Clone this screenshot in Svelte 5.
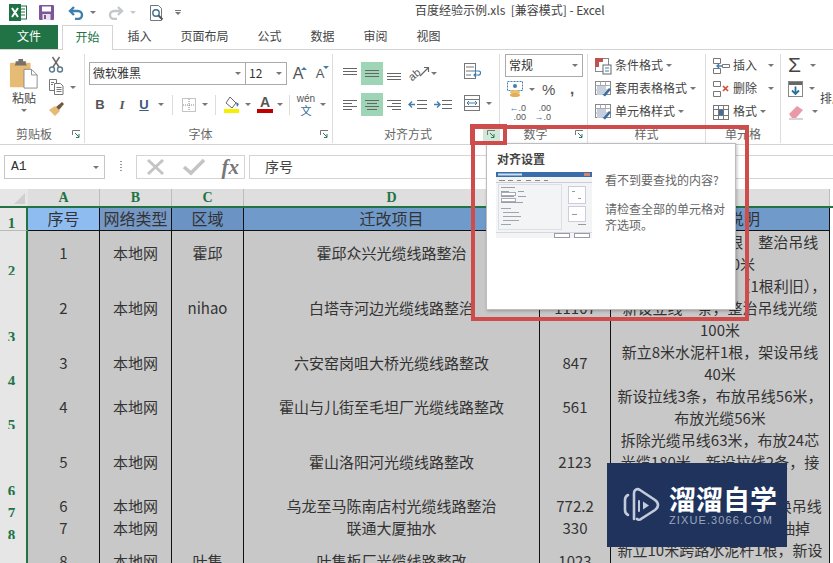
<script lang="ts">
  const tabs = ['插入', '页面布局', '公式', '数据', '审阅', '视图'];
  const columns = ['A', 'B', 'C', 'D', 'E', 'F'];

  const rows = [
    { h: 44, no: '2', cells: ['1', '本地网', '霍邱', '霍邱众兴光缆线路整治', '1340'], note: ['新立8米水泥杆2根，整治吊线', '光缆120米'] },
    { h: 66, no: '3', cells: ['2', '本地网', 'nihao', '白塔寺河边光缆线路整治', '11107'], note: ['新立8米水泥杆1根（1根利旧），', '新设立线一条，整治吊线光缆', '100米'] },
    { h: 44, no: '4', cells: ['3', '本地网', '', '六安窑岗咀大桥光缆线路整改', '847'], note: ['新立8米水泥杆1根，架设吊线', '40米'] },
    { h: 44, no: '5', cells: ['4', '本地网', '', '霍山与儿街至毛坦厂光缆线路整改', '561'], note: ['新设拉线3条，布放吊线56米，', '布放光缆56米'] },
    { h: 66, no: '6', cells: ['5', '本地网', '', '霍山洛阳河光缆线路整改', '2123'], note: ['拆除光缆吊线63米，布放24芯', '光缆180米，新设拉线2条，接', '头2个'] },
    { h: 22, no: '7', cells: ['6', '本地网', '', '乌龙至马陈南店村光缆线路整治', '772.2'], note: ['新立电杆1根，重新架设换吊线'] },
    { h: 22, no: '8', cells: ['7', '本地网', '', '联通大厦抽水', '330'], note: ['将原有主干光缆从管道抽掉'] },
    { h: 44, no: '9', cells: ['8', '本地网', '叶集', '叶集板厂光缆线路整改', '1023'], note: ['新立10米跨路水泥杆1根，新设', '吊线30米'] }
  ];
</script>

{#snippet launcher(active = false)}
  <span class="launch" class:on={active}>
    <svg width="9" height="9" viewBox="0 0 9 9" fill="none" stroke="#777">
      <path d="M.5 5V.5H8M.5 .5" />
      <path d="M3 3l4 4M7 4v3.500H4" stroke="#2f7a58" />
    </svg>
  </span>
{/snippet}

{#snippet lines(n, kind)}
  <svg width="18" height="18" viewBox="0 0 18 18" stroke="#666" fill="none">
    {#if kind === 'left'}
      <path d="M2 4.500h14M2 7.500h9M2 10.500h14M2 13.500h9" />
    {:else if kind === 'center'}
      <path d="M2 4.500h14M4 7.500h10M2 10.500h14M4 13.500h10" />
    {:else if kind === 'right'}
      <path d="M2 4.500h14M7 7.500h9M2 10.500h14M7 13.500h9" />
    {:else if kind === 'top'}
      <path d="M2 {n + .5}h14M2 {n + 3.5}h14M2 {n + 6.5}h14" />
    {/if}
  </svg>
{/snippet}

{#snippet tableIcon(brush)}
  <svg width="18" height="18" viewBox="0 0 18 18" fill="none">
    <rect x="1.500" y="1.500" width="15" height="13" fill="#fff" stroke="#888" />
    <path d="M1.500 5.500h15M1.500 10h15M6.500 1.500v13M11.500 1.500v13" stroke="#aaa" />
    {#if brush}
      <path d="M3 6h9v6l-4 3H3z" fill="#c5cfdd" />
      <path d="M9 15l6-7 2 1.500-6 7z" fill="#3c6d9f" />
    {/if}
  </svg>
{/snippet}

<div class="app">
  <header class="titlebar">
    <div class="qat">
      <svg class="q-xl" width="18" height="17" viewBox="0 0 18 17">
        <rect x="9" y="2" width="8.500" height="13" fill="#fff" stroke="#1e7145" />
        <path d="M12 5h4M12 8h4M12 11h4" stroke="#1e7145" />
        <rect x="0" y="0" width="12" height="17" fill="#1e7145" />
        <path d="M3 4l6 9M9 4l-6 9" stroke="#fff" stroke-width="2" />
      </svg>
      <svg class="q-save" width="15" height="15" viewBox="0 0 15 15">
        <rect width="15" height="15" rx="1" fill="#7c5699" />
        <rect x="3" y="1.500" width="9" height="5" fill="#fff" />
        <rect x="3.500" y="9" width="8" height="6" fill="#e8e0ee" />
        <rect x="5" y="10" width="2" height="4" fill="#7c5699" />
      </svg>
      <svg class="q-undo" width="16" height="14" viewBox="0 0 16 14" fill="none" stroke="#3f7fb0" stroke-width="2.400">
        <path d="M6 1L2 5l4 4M2 5h8a3.500 3.500 0 0 1 0 8H7" />
      </svg>
      <i class="caret"></i>
      <svg class="q-redo" width="16" height="14" viewBox="0 0 16 14" fill="none" stroke="#c4c8cc" stroke-width="2.400">
        <path d="M10 1l4 4-4 4M14 5H6a3.500 3.500 0 0 0 0 8h3" />
      </svg>
      <i class="caret light"></i>
      <svg class="q-print" width="16" height="18" viewBox="0 0 16 18" fill="none" stroke="#777">
        <path d="M1.500 1.500h8l3 3v12h-11z" fill="#fff" />
        <circle cx="7" cy="9" r="3.200" stroke="#3d6f8f" stroke-width="1.400" />
        <path d="M9.500 11.500l4 4" stroke="#555" stroke-width="2" />
      </svg>
      <span class="q-more"><b></b><i class="caret"></i></span>
    </div>
    <div class="doc-title">百度经验示例.xls&nbsp; [兼容模式] - Excel</div>
  </header>

  <nav class="tabs">
    <div class="file">文件</div>
    <div class="tab active">开始</div>
    {#each tabs as tab}
      <div class="tab">{tab}</div>
    {/each}
  </nav>

  <section class="ribbon">
    <div class="group g-clip">
      <div class="body clip">
        <div class="paste">
          <svg width="30" height="30" viewBox="0 0 32 32">
            <rect x="1" y="4" width="22" height="26" rx="1" fill="#e6bb74" />
            <path d="M7 5V2.500h3V0h5v2.500h3V5l1 2H6z" fill="#77716a" />
            <path d="M16 11h8l6 6v14H16z" fill="#fff" stroke="#8a8a8a" />
            <path d="M24 11v6h6" fill="none" stroke="#8a8a8a" />
          </svg>
          <span>粘贴</span>
          <i class="caret"></i>
        </div>
        <div class="clip-tools">
          <svg width="16" height="17" viewBox="0 0 16 17" fill="none" stroke="#5b7c8d" stroke-width="1.400">
            <circle cx="4" cy="13.500" r="2.500" />
            <circle cx="12" cy="13.500" r="2.500" />
            <path d="M5 11L11.500 1M11 11L4.500 1" stroke="#666" />
          </svg>
          <div class="copy">
            <svg width="16" height="16" viewBox="0 0 16 16" fill="#fff" stroke="#777">
              <path d="M1.500 .5h7v11h-7z" />
              <path d="M6.500 4.500h6l2.500 2.500v8.500H6.500z" />
              <path d="M8.500 8.500h5M8.500 10.500h5M8.500 12.500h5M3 3.500h3M3 5.500h2" fill="none" />
            </svg>
            <i class="caret"></i>
          </div>
          <svg width="17" height="16" viewBox="0 0 17 16">
            <path d="M1 9l6-4 5 5-5 5z" fill="#e6bb74" />
            <path d="M8 6l6-5 2 2-5 6z" fill="#6f5a42" />
          </svg>
        </div>
      </div>
      <div class="glabel"><span class="gname">剪贴板</span>{@render launcher()}</div>
    </div>

    <div class="group g-font">
      <div class="body font">
        <div class="font-top">
          <div class="combo name"><span>微软雅黑</span><i class="caret"></i></div>
          <div class="combo size"><span>12</span><i class="caret"></i></div>
          <div class="grow"><span class="a big">A</span><i class="up"></i></div>
          <div class="grow"><span class="a">A</span><i class="down"></i></div>
        </div>
        <div class="font-bot">
          <span class="cell w22 bold">B</span>
          <span class="cell w22 ital">I</span>
          <span class="cell w22 under">U</span>
          <span class="cell w12"><i class="caret"></i></span>
          <span class="vsep"></span>
          <span class="cell w22">
            <svg width="14" height="14" viewBox="0 0 14 14" fill="none" stroke="#888" stroke-dasharray="1 1">
              <rect x=".5" y=".5" width="13" height="13" />
              <path d="M7 1v12M1 7h12" />
            </svg>
          </span>
          <span class="cell w10"><i class="caret"></i></span>
          <span class="vsep"></span>
          <span class="cell w22">
            <svg width="17" height="18" viewBox="0 0 17 18">
              <path d="M6 1l6 6-4 5-6-5z" fill="#fff" stroke="#666" />
              <path d="M12 6l3 2-2 3z" fill="#3d6fb0" />
              <rect x="0" y="13" width="15" height="4" fill="#f4f000" />
            </svg>
          </span>
          <span class="cell w10"><i class="caret"></i></span>
          <span class="cell w22 color"><b>A</b><em></em></span>
          <span class="cell w8"><i class="caret"></i></span>
          <span class="vsep"></span>
          <span class="cell w22 wen"><small>wén</small><b>文</b></span>
          <span class="cell w12"><i class="caret"></i></span>
        </div>
      </div>
      <div class="glabel"><span class="gname">字体</span>{@render launcher()}</div>
    </div>

    <div class="group g-align">
      <div class="body align">
        <div class="align-grid">
          <span class="cell w22">{@render lines(3, 'top')}</span>
          <span class="cell w22 hi">{@render lines(5, 'top')}</span>
          <span class="cell w22 low">{@render lines(8, 'top')}</span>
          <span class="orient">
            <svg width="22" height="20" viewBox="0 0 22 20" fill="none" stroke="#555">
              <text x="1" y="15" font-size="11" fill="#555" stroke="none" transform="rotate(-40 6 12)" font-family="Liberation Sans, sans-serif">ab</text>
              <path d="M12 12l8-8M16 3.500h4.500V8" stroke="#666" stroke-width="1.200" />
            </svg>
            <i class="caret"></i>
          </span>
          <span class="cell w22">{@render lines(0, 'left')}</span>
          <span class="cell w22 hi">{@render lines(0, 'center')}</span>
          <span class="cell w22">{@render lines(0, 'right')}</span>
          <span class="indents">
            <svg width="20" height="16" viewBox="0 0 20 16" fill="none" stroke="#666">
              <path d="M9 3.500h10M9 7.500h10M9 11.500h10" />
              <path d="M7 7.500H1M4 4.500l-3 3 3 3" stroke="#3f7fb0" stroke-width="1.400" />
            </svg>
            <svg width="20" height="16" viewBox="0 0 20 16" fill="none" stroke="#666">
              <path d="M9 3.500h10M9 7.500h10M9 11.500h10" />
              <path d="M1 7.500h6M4 4.500l3 3-3 3" stroke="#3f7fb0" stroke-width="1.400" />
            </svg>
          </span>
        </div>
        <div class="wrap-col">
          <svg width="18" height="18" viewBox="0 0 18 18" fill="none" stroke="#777">
            <rect x="1.500" y="1.500" width="11" height="15" fill="#fff" />
            <path d="M3 5h8M3 9h6M3 13h5" />
            <path d="M9 9h7a2 2 0 0 1-1 4h-3M13 11l-2 2 2 2" stroke="#3f7fb0" stroke-width="1.200" />
          </svg>
          <div class="merge">
            <svg width="18" height="18" viewBox="0 0 18 18" fill="none" stroke="#777">
              <rect x="1.500" y="1.500" width="15" height="15" fill="#fff" />
              <path d="M1.500 5.500h15M1.500 12.500h15" />
              <path d="M4 9h10M4 9l2-2M4 9l2 2M14 9l-2-2M14 9l-2 2" stroke="#3f7fb0" />
            </svg>
            <i class="caret"></i>
          </div>
        </div>
      </div>
      <div class="glabel"><span class="gname">对齐方式</span>{@render launcher(true)}</div>
    </div>

    <div class="group g-num">
      <div class="body num">
        <div class="combo fmt"><span>常规</span><i class="caret"></i></div>
        <div class="num-row">
          <span class="money">
            <svg width="17" height="17" viewBox="0 0 17 17">
              <rect x=".5" y=".5" width="15" height="9" fill="#fff" stroke="#3f7fb0" stroke-dasharray="2 1" />
              <circle cx="8" cy="5" r="2" fill="#3f7fb0" />
              <ellipse cx="8" cy="11" rx="5" ry="2" fill="#ecc26e" />
              <ellipse cx="8" cy="14" rx="5" ry="2" fill="#e3ae55" />
            </svg>
            <i class="caret"></i>
          </span>
          <span class="pct">%</span>
          <span class="comma">,</span>
        </div>
        <div class="num-row dec">
          <span class="dec-ico"><u>←</u>.0<br />.00</span>
          <span class="dec-ico">.00<br /><u>→</u>.0</span>
        </div>
      </div>
      <div class="glabel"><span class="gname">数字</span>{@render launcher()}</div>
    </div>

    <div class="group g-style">
      <div class="body list">
        <div class="item">
          <svg width="18" height="18" viewBox="0 0 18 18" fill="none">
            <rect x="1.500" y="1.500" width="13" height="13" fill="#fff" stroke="#888" />
            <rect x="1" y="1" width="8" height="4" fill="#c0504d" />
            <rect x="1" y="5" width="4" height="5" fill="#b55" />
            <rect x="9" y="8" width="8" height="9" fill="#fff" stroke="#666" />
            <path d="M11 11h4M11 14h4" stroke="#3f7fb0" />
          </svg>
          <span>条件格式</span><i class="caret"></i>
        </div>
        <div class="item">{@render tableIcon(true)}<span>套用表格格式</span><i class="caret"></i></div>
        <div class="item">{@render tableIcon(true)}<span>单元格样式</span><i class="caret"></i></div>
      </div>
      <div class="glabel"><span class="gname">样式</span></div>
    </div>

    <div class="group g-cells">
      <div class="body list">
        <div class="item">
          <svg width="18" height="18" viewBox="0 0 18 18" fill="none" stroke="#777">
            <path d="M1.500 1.500h7v5h-7zM1.500 11.500h7v5h-7z" fill="#fff" />
            <path d="M5 9h5M7 7l-2 2 2 2" stroke="#3f7fb0" stroke-width="1.300" />
            <path d="M10.500 7.500h7v3h-7z" fill="#fff" />
          </svg>
          <span class="wide">插入</span><i class="caret"></i>
        </div>
        <div class="item">
          <svg width="18" height="18" viewBox="0 0 18 18" fill="none" stroke="#777">
            <path d="M1.500 1.500h7v5h-7zM1.500 11.500h7v5h-7z" fill="#fff" />
            <path d="M11 6l5 5M16 6l-5 5" stroke="#d0503c" stroke-width="1.700" />
          </svg>
          <span class="wide">删除</span><i class="caret"></i>
        </div>
        <div class="item">
          <svg width="18" height="18" viewBox="0 0 18 18" fill="none" stroke="#777">
            <rect x="1.500" y="2.500" width="15" height="14" fill="#fff" />
            <path d="M1.500 6.500h15M1.500 12.500h15M6.500 2.500v14M11.500 2.500v14" />
            <rect x="7" y="7" width="4" height="5" fill="#3f6f9f" stroke="none" />
          </svg>
          <span>格式</span><i class="caret"></i>
        </div>
      </div>
      <div class="glabel"><span class="gname">单元格</span></div>
    </div>

    <div class="group g-edit">
      <div class="body edit">
        <div class="edit-col">
          <div class="item"><span class="sigma">Σ</span><i class="caret"></i></div>
          <div class="item">
            <svg width="15" height="16" viewBox="0 0 15 16">
              <rect x=".5" y=".5" width="14" height="15" fill="#fff" stroke="#888" />
              <rect x="1" y="1" width="13" height="3" fill="#666" />
              <path d="M7.500 5.500v7M4 9.500l3.500 3.500L11 9.500" fill="none" stroke="#2a6f9f" stroke-width="1.800" />
            </svg>
            <i class="caret"></i>
          </div>
          <div class="item">
            <svg width="18" height="16" viewBox="0 0 18 16">
              <path d="M1 10l8-8 6 4-7 8H4z" fill="#e89aa8" />
              <path d="M1 15h14" stroke="#aaa" />
            </svg>
            <i class="caret"></i>
          </div>
        </div>
        <span class="sort">排序和筛选</span>
      </div>
    </div>
  </section>

  <section class="formula">
    <div class="namebox"><span>A1</span><i class="caret"></i></div>
    <div class="dots"></div>
    <div class="fx-box">
      <svg width="22" height="18" viewBox="0 0 22 18" fill="none" stroke="#c4c4c4" stroke-width="3"><path d="M3 2l15 14M18 2L3 16" /></svg>
      <svg width="24" height="18" viewBox="0 0 24 18" fill="none" stroke="#c4c4c4" stroke-width="3.500"><path d="M2 9l7 6L22 2" /></svg>
      <span class="fx">fx</span>
    </div>
    <div class="input">序号</div>
  </section>

  <section class="sheet">
    <div class="grid-row col-head">
      <div class="corner"><i></i></div>
      {#each columns as c}
        <div class="col-name">{c}</div>
      {/each}
    </div>
    <div class="grid-row head-row">
      <div class="row-no">1</div>
      <div class="th t1">序号</div>
      <div class="th t2">网络类型</div>
      <div class="th t3">区域</div>
      <div class="th">迁改项目</div>
      <div class="th">长度</div>
      <div class="th">工程量说明</div>
    </div>
    {#each rows as row}
      <div class="grid-row data" style="height: {row.h}px">
        <div class="row-no">{row.no}</div>
        {#each row.cells as cell}
          <div class="td">{cell}</div>
        {/each}
        <div class="td note">
          <div>
            {#each row.note as line}
              <div>{line}</div>
            {/each}
          </div>
        </div>
      </div>
    {/each}
  </section>

  <div class="pop">
    <div class="pop-title">对齐设置</div>
    <div class="pop-body">
      <svg class="shot" width="96" height="66" viewBox="0 0 96 66">
        <rect width="96" height="66" fill="#f3f4f6" />
        <rect width="96" height="5" fill="#3b6ea8" />
        <rect x="2" y="1.500" width="24" height="2" fill="#cfe0f2" />
        <rect x="88" y="1" width="6" height="3" fill="#d9816b" />
        <path d="M3 8.500h6M12 8.500h5M21 8.500h4M30 8.500h5M39 8.500h5M48 8.500h4" stroke="#888" />
        <path d="M0 10.500h96" stroke="#c9ccd2" />
        <rect x="2.500" y="12.500" width="63" height="45" fill="none" stroke="#dcdfe3" />
        <path d="M5 15.500h14M5 19.500h8M5 24.500h13M22 19.500h6M22 24.500h8M5 30.500h22" stroke="#9a9fa8" />
        <rect x="5.500" y="20.500" width="14" height="3" fill="#fff" stroke="#aab" />
        <rect x="5.500" y="26.500" width="14" height="3" fill="#fff" stroke="#aab" />
        <path d="M5 36.500h10M7 40.500h16M7 44.500h18M7 48.500h16M5 52.500h10" stroke="#a0a4ab" />
        <rect x="72.500" y="14.500" width="17" height="17" fill="#fff" stroke="#ccd" />
        <rect x="72.500" y="34.500" width="17" height="15" fill="#fff" stroke="#ccd" />
        <path d="M76 19.500h3M82 26.500h3M76 42.500h5M82 52.500h8" stroke="#999" />
        <path d="M0 60.500h96" stroke="#d5d7db" />
        <rect x="58.500" y="61.500" width="15" height="4" fill="#fff" stroke="#99a" />
        <rect x="78.500" y="61.500" width="15" height="4" fill="#fff" stroke="#99a" />
      </svg>
      <div class="pop-text">
        <p>看不到要查找的内容?</p>
        <p>请检查全部的单元格对<br />齐选项。</p>
      </div>
    </div>
  </div>

  <div class="mark big-mark"></div>
  <div class="mark small-mark"></div>

  <div class="watermark">
    <svg width="38" height="38" viewBox="0 0 38 38" fill="none" stroke="#c3cadb" stroke-width="2.600" stroke-linecap="round">
      <path d="M6 9c-2 1-3 2-3 5v10c0 3 1 4 3 5" />
      <path d="M12 33V7c0-3 3-5 6-3l15 10c4 3 4 7 0 10L19 33c-1 1-3 1-4 0" />
      <path d="M17 15v10" stroke-width="2" />
      <path d="M21 15.500l6 4-6 4z" fill="#c3cadb" stroke="none" />
    </svg>
    <div class="wm-text">
      <div class="wm-cn">溜溜自学</div>
      <div class="wm-en">ZIXUE.3066.COM</div>
    </div>
  </div>
</div>

<style>
  :global(body) {
    margin: 0;
    background: #fff;
  }
  .app {
    position: relative;
    width: 833px;
    height: 563px;
    overflow: hidden;
    background: #fff;
    color: #444;
    font-family: "Noto Sans CJK SC", "Noto Sans", sans-serif;
    font-size: 12px;
    line-height: 16px;
  }
  .caret {
    display: inline-block;
    width: 0;
    height: 0;
    border-left: 3px solid transparent;
    border-right: 3px solid transparent;
    border-top: 3px solid #777;
  }
  .caret.light {
    border-top-color: #c4c8cc;
  }

  /* title bar */
  .titlebar {
    display: grid;
    grid-template-columns: 415px 1fr;
    height: 25px;
    align-items: center;
  }
  .qat {
    display: flex;
    align-items: center;
    padding-left: 9px;
  }
  .q-save { margin-left: 12px; }
  .q-undo { margin-left: 14px; }
  .qat .caret { margin-left: 6px; }
  .q-redo { margin-left: 12px; }
  .q-print { margin-left: 13px; }
  .q-more {
    display: flex;
    flex-direction: column;
    align-items: center;
    gap: 1px;
    margin-left: 10px;
  }
  .q-more b {
    width: 6px;
    height: 1px;
    background: #777;
  }
  .q-more .caret { margin: 0; }
  .doc-title {
    margin-top: -6px;
    color: #444;
    white-space: nowrap;
  }

  /* tabs */
  .tabs {
    display: flex;
    height: 24px;
    border-bottom: 1px solid #d4d4d4;
  }
  .file {
    width: 58px;
    margin-right: 4px;
    background: #217346;
    color: #fff;
    text-align: center;
    line-height: 22px;
  }
  .tab {
    padding: 0 14.500px;
    line-height: 22px;
    color: #444;
  }
  .tab.active {
    box-sizing: border-box;
    width: 51px;
    height: 25px;
    padding: 0;
    border: 1px solid #d4d4d4;
    border-bottom: none;
    background: #fff;
    color: #217346;
    text-align: center;
  }

  /* ribbon */
  .ribbon {
    display: flex;
    height: 95px;
    box-sizing: border-box;
    border-bottom: 1px solid #d4d4d4;
    overflow: hidden;
  }
  .group {
    display: flex;
    flex-direction: column;
    box-sizing: border-box;
    height: 89px;
    border-right: 1px solid #dcdcdc;
    margin: 4px 0 0;
  }
  .body {
    box-sizing: border-box;
    height: 72px;
    flex: none;
  }
  .glabel {
    display: flex;
    align-items: center;
    height: 17px;
    color: #666;
  }
  .gname {
    flex: 1;
    margin-bottom: 2px;
    text-align: center;
  }
  .launch {
    display: flex;
    align-items: center;
    justify-content: center;
    width: 16px;
    height: 17px;
  }
  .launch.on {
    background: #cfe8da;
  }
  .g-clip { width: 85px; }
  .g-font { width: 248px; }
  .g-align { width: 167px; }
  .g-num { width: 88px; }
  .g-style { width: 118px; }
  .g-cells { width: 75px; }
  .g-edit { flex: 1; border-right: none; }

  .clip {
    display: flex;
    padding: 2px 0 0 9px;
  }
  .paste {
    display: flex;
    flex-direction: column;
    align-items: center;
    width: 30px;
    padding-top: 3px;
    margin-right: 9px;
    color: #444;
  }
  .paste span {
    margin-top: 1px;
    font-size: 12px;
    line-height: 16px;
  }
  .paste .caret { margin-top: 3px; }
  .clip-tools {
    display: flex;
    flex-direction: column;
    align-items: flex-start;
    gap: 6px;
  }
  .copy {
    display: flex;
    align-items: center;
    gap: 6px;
  }

  .font { padding: 8px 0 0 4px; }
  .font-top {
    display: flex;
    align-items: center;
    height: 23px;
  }
  .combo {
    display: flex;
    align-items: center;
    justify-content: space-between;
    box-sizing: border-box;
    height: 23px;
    padding: 0 4px 2px 3px;
    border: 1px solid #ababab;
    background: #fff;
    color: #333;
  }
  .combo .caret { margin-top: 2px; }
  .combo.name { width: 157px; }
  .combo.size {
    width: 41px;
    border-left: none;
  }
  .grow {
    position: relative;
    width: 22px;
    text-align: center;
  }
  .a {
    font-family: "Liberation Sans", sans-serif;
    font-size: 13px;
    color: #555;
  }
  .a.big { font-size: 16px; }
  .up, .down {
    position: absolute;
    top: 1px;
    right: 2px;
    width: 0;
    height: 0;
    border-left: 3px solid transparent;
    border-right: 3px solid transparent;
  }
  .up { border-bottom: 3px solid #3f7fb0; }
  .down { border-top: 3px solid #3f7fb0; }
  .font-bot {
    display: flex;
    align-items: center;
    height: 23px;
    margin-top: 8px;
  }
  .cell {
    display: flex;
    align-items: center;
    justify-content: center;
    flex: none;
    height: 23px;
  }
  .w8 { width: 8px; }
  .w10 { width: 10px; }
  .w12 { width: 12px; }
  .w22 { width: 22px; }
  .vsep {
    flex: none;
    width: 1px;
    height: 20px;
    margin: 0 5px;
    background: #dcdcdc;
  }
  .bold, .ital, .under {
    font-family: "Liberation Sans", sans-serif;
    font-size: 13px;
    color: #555;
  }
  .bold { font-weight: 700; }
  .ital {
    font-family: "Liberation Serif", serif;
    font-style: italic;
    font-weight: 700;
  }
  .under {
    font-weight: 700;
    text-decoration: underline;
    color: #3d5a80;
  }
  .color {
    flex-direction: column;
    margin-left: 1px;
  }
  .color b {
    font: 700 14px/13px "Liberation Sans", sans-serif;
    color: #555;
  }
  .color em {
    width: 16px;
    height: 4px;
    background: #c00000;
  }
  .wen {
    flex-direction: column;
    line-height: 10px;
  }
  .wen small {
    font: 10px/10px "Liberation Sans", sans-serif;
    color: #555;
  }
  .wen b {
    font-size: 11px;
    font-weight: 400;
    line-height: 12px;
    color: #2c6a94;
  }

  .align {
    display: flex;
    padding: 8px 0 0 6px;
  }
  .align-grid {
    display: grid;
    grid-template-columns: 22px 22px 22px 48px;
    grid-template-rows: 23px 23px;
    row-gap: 8px;
  }
  .hi { background: #9fd5b7; }
  .orient, .indents {
    display: flex;
    align-items: center;
    padding-left: 3px;
    gap: 1px;
  }
  .indents { gap: 5px; }
  .wrap-col {
    display: flex;
    flex-direction: column;
    gap: 14px;
    padding: 0 0 0 10px;
  }
  .merge {
    display: flex;
    align-items: center;
    gap: 5px;
  }

  .num {
    padding: 0 0 0 5px;
  }
  .combo.fmt { width: 78px; }
  .num-row {
    display: flex;
    align-items: center;
    height: 24px;
    padding-left: 2px;
    color: #555;
  }
  .money {
    display: flex;
    align-items: center;
    gap: 5px;
    width: 35px;
  }
  .pct {
    width: 22px;
    font: 15px "Liberation Sans", sans-serif;
  }
  .comma {
    padding-left: 6px;
    font: 700 15px "Liberation Sans", sans-serif;
    line-height: 10px;
  }
  .dec {
    padding-left: 0;
    gap: 4px;
  }
  .dec-ico {
    width: 21px;
    font: 9px/9px "Liberation Sans", sans-serif;
    color: #555;
    text-align: right;
  }
  .dec-ico u {
    color: #3f7fb0;
    text-decoration: none;
  }

  .list {
    display: flex;
    flex-direction: column;
    padding: 0 0 0 6px;
  }
  .item {
    display: flex;
    align-items: center;
    gap: 3px;
    height: 23px;
    white-space: nowrap;
    color: #444;
  }
  .item span {
    margin: 0 0 2px;
  }
  .item .wide { margin-right: 8px; }

  .edit {
    display: flex;
    padding-left: 7px;
  }
  .edit-col { width: 35px; }
  .edit-col .item {
    gap: 6px;
  }
  .sigma {
    width: 16px;
    font: 21px/23px "Liberation Sans", sans-serif;
    color: #444;
  }
  .sort {
    align-self: center;
    width: 12px;
    margin: 16px 0 0 -3px;
    white-space: nowrap;
  }

  /* formula bar */
  .formula {
    display: flex;
    align-items: center;
    height: 44px;
    box-sizing: border-box;
    padding: 0 0 0 4px;
  }
  .namebox {
    display: flex;
    align-items: center;
    justify-content: space-between;
    box-sizing: border-box;
    width: 101px;
    height: 24px;
    padding: 0 5px 0 6px;
    border: 1px solid #c6c6c6;
    font-family: "Liberation Mono", monospace;
    font-size: 13px;
    color: #333;
  }
  .dots {
    width: 2px;
    height: 12px;
    margin: 0 14px 0 15px;
    background: repeating-linear-gradient(#999 0 1px, transparent 1px 3px);
  }
  .fx-box {
    display: flex;
    align-items: center;
    justify-content: space-between;
    box-sizing: border-box;
    width: 109px;
    height: 24px;
    padding: 0 5px 0 8px;
    border: 1px solid #d4d4d4;
  }
  .fx {
    font: italic 700 21px/22px "Liberation Serif", serif;
    color: #777;
  }
  .input {
    flex: 1;
    height: 24px;
    box-sizing: border-box;
    margin-left: 4px;
    padding-left: 15px;
    border: 1px solid #d4d4d4;
    border-right: none;
    font-size: 14px;
    line-height: 20px;
    color: #444;
  }

  /* sheet */
  .grid-row {
    display: grid;
    grid-template-columns: 28px 72px 72px 72px 296px 71px 219px;
  }
  .col-head {
    height: 19px;
    box-sizing: border-box;
    border-bottom: 2px solid #217346;
  }
  .corner {
    position: relative;
    background: #e6e6e6;
  }
  .corner i {
    position: absolute;
    right: 3px;
    bottom: 2px;
    border-left: 11px solid transparent;
    border-bottom: 11px solid #cfcfcf;
  }
  .col-name {
    box-sizing: border-box;
    border-right: 1px solid #bcbcbc;
    background: #dedede;
    text-align: center;
    font: 700 14px/17px "Liberation Serif", serif;
    color: #217346;
  }
  .head-row {
    height: 23px;
  }
  .row-no {
    display: flex;
    align-items: flex-end;
    justify-content: center;
    box-sizing: border-box;
    padding: 0 3px 0 0;
    border-right: 2px solid #217346;
    border-bottom: 1px solid #bbb;
    background: #e6e6e6;
    font: 700 15px/14px "Liberation Serif", serif;
    color: #217346;
  }
  .th, .td {
    display: flex;
    align-items: center;
    justify-content: center;
    box-sizing: border-box;
    min-width: 0;
    border-right: 1px solid #111;
    border-bottom: 1px solid #111;
    white-space: nowrap;
    color: #333;
  }
  .th {
    padding-bottom: 2px;
    background: #6f9aca;
    font-size: 16px;
    line-height: 18px;
  }
  .t1 { background: #8ebcf1; }
  .t2 { background: #7598c5; }
  .t3 { background: #6b94c4; }
  .td {
    padding-bottom: 3px;
    background: #c8c8c8;
    font-size: 15px;
    line-height: 22px;
  }
  .note {
    text-align: center;
  }

  /* overlays */
  .pop {
    position: absolute;
    left: 486px;
    top: 143px;
    box-sizing: border-box;
    width: 250px;
    height: 167px;
    padding: 6px 9px;
    border: 1px solid #bdbdbd;
    background: #fff;
    box-shadow: 1px 1px 3px rgba(0, 0, 0, 0.25);
  }
  .pop-title {
    padding-left: 1px;
    font-weight: 700;
    line-height: 18px;
    color: #444;
  }
  .pop-body {
    display: flex;
    gap: 13px;
    margin-top: 4px;
  }
  .shot { flex: none; }
  .pop-text {
    color: #666;
    line-height: 16px;
    white-space: nowrap;
  }
  .pop-text p {
    margin: 0 0 13px;
  }
  .mark {
    position: absolute;
    box-sizing: border-box;
    border: 4px solid #cf4c4c;
    pointer-events: none;
  }
  .big-mark {
    left: 471px;
    top: 125px;
    width: 278px;
    height: 196px;
  }
  .small-mark {
    left: 470px;
    top: 124px;
    width: 37px;
    height: 21px;
  }
  .watermark {
    position: absolute;
    left: 607px;
    top: 463px;
    display: flex;
    align-items: center;
    gap: 9px;
    box-sizing: border-box;
    width: 180px;
    height: 84px;
    padding-left: 15px;
    background: #20335c;
    color: #fff;
  }
  .wm-cn {
    font-size: 27px;
    font-weight: 700;
    line-height: 30px;
    white-space: nowrap;
  }
  .wm-en {
    font: 11px/12px "Liberation Sans", sans-serif;
    letter-spacing: 1.100px;
    color: #9aa6bd;
    white-space: nowrap;
  }
</style>
